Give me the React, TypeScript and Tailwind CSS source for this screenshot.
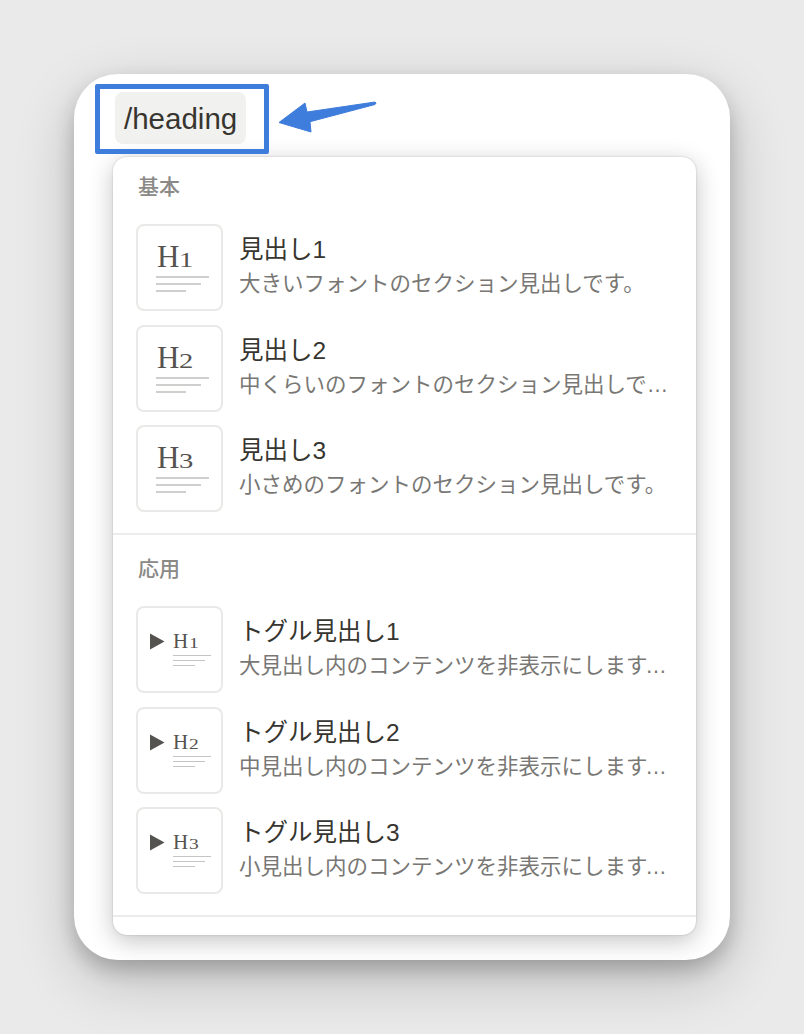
const jp = '"Liberation Sans","Noto Sans CJK JP",sans-serif';

type Item = { level: number; title: string; desc: string };

const basic: Item[] = [
  { level: 1, title: '見出し1', desc: '大きいフォントのセクション見出しです。' },
  { level: 2, title: '見出し2', desc: '中くらいのフォントのセクション見出しです。' },
  { level: 3, title: '見出し3', desc: '小さめのフォントのセクション見出しです。' },
];

const advanced: Item[] = [
  { level: 1, title: 'トグル見出し1', desc: '大見出し内のコンテンツを非表示にします。開閉できます。' },
  { level: 2, title: 'トグル見出し2', desc: '中見出し内のコンテンツを非表示にします。開閉できます。' },
  { level: 3, title: 'トグル見出し3', desc: '小見出し内のコンテンツを非表示にします。開閉できます。' },
];

const BigIcon = ({ level }: { level: number }) => (
  <div className="w-[87px] h-[87px] shrink-0 rounded-[8px] border-2 border-[#e9e9e7] bg-white flex flex-col pl-[18px] pt-[14px]">
    <div className="ml-[1px] h-[34px] text-[31px] leading-[34px] text-[#55534f] font-['Liberation_Serif',serif] whitespace-nowrap">
      H<span className="inline-block text-[22px] leading-none scale-x-[1.3] origin-left">{level}</span>
    </div>
    <div className="mt-[2px] w-[53px] h-[2px] bg-[#cfcfcd]" />
    <div className="mt-[5px] w-[45px] h-[2px] bg-[#cfcfcd]" />
    <div className="mt-[5px] w-[30px] h-[2px] bg-[#cfcfcd]" />
  </div>
);

const ToggleIcon = ({ level }: { level: number }) => (
  <div className="w-[87px] h-[87px] shrink-0 rounded-[8px] border-2 border-[#e9e9e7] bg-white flex pl-[12px] pt-[24px]">
    <svg width="15" height="17" viewBox="0 0 15 17" className="shrink-0 mt-[1px]">
      <path d="M0 0.5 L14.5 8.5 L0 16.5 Z" fill="#55534f" />
    </svg>
    <div className="ml-[8px] flex flex-col -mt-[2px]">
      <div className="h-[22px] text-[21px] leading-[22px] text-[#55534f] font-['Liberation_Serif',serif] whitespace-nowrap">
        H<span className="inline-block ml-[1px] text-[15px] leading-none scale-x-[1.3] origin-left">{level}</span>
      </div>
      <div className="mt-[3px] w-[38px] h-[1px] bg-[#c4c4c2]" />
      <div className="mt-[4px] w-[32px] h-[1px] bg-[#c4c4c2]" />
      <div className="mt-[4px] w-[22px] h-[1px] bg-[#c4c4c2]" />
    </div>
  </div>
);

const Row = ({ item, toggle }: { item: Item; toggle?: boolean }) => (
  <div className="flex items-center h-[87px] pl-[23px] pr-[24px]">
    {toggle ? <ToggleIcon level={item.level} /> : <BigIcon level={item.level} />}
    <div className="ml-[16px] min-w-0 flex-1 -mt-[3px]">
      <div className="text-[24.5px] leading-[33px] text-[#37352f]">{item.title}</div>
      <div className="mt-[3px] text-[21.5px] leading-[30px] text-[#787774] truncate">{item.desc}</div>
    </div>
  </div>
);

const Section = ({ label, items, toggle }: { label: string; items: Item[]; toggle?: boolean }) => (
  <div className={`${toggle ? 'pt-[20px]' : 'pt-[16px]'} pb-[21px] border-b-2 border-[#ececeb]`}>
    <div className="pl-[25px] text-[21px] leading-[28px] font-medium text-[#8a8986]">{label}</div>
    <div className="mt-[23px] flex flex-col gap-[13.5px]">
      {items.map((item) => (
        <Row key={item.title} item={item} toggle={toggle} />
      ))}
    </div>
  </div>
);

export default function App() {
  return (
    <div className="w-[804px] h-[1034px] bg-[#eaeaea] pt-[74px] pl-[74px] overflow-hidden" style={{ fontFamily: jp }}>
      <div className="relative w-[656px] h-[886px] bg-white rounded-[44px] shadow-[0_10px_20px_rgba(0,0,0,0.2),0_20px_60px_rgba(0,0,0,0.2)] pt-[18px] pl-[41px]">
        <div className="w-fit h-[52px] px-[9px] rounded-[8px] bg-[#f1f1ef] text-[29.5px] leading-[54px] text-[#37352f]">
          /heading
        </div>

        {/* annotation */}
        <div className="absolute left-[21px] top-[10px] w-[174px] h-[70px] border-[5px] border-[#3f7ddc] rounded-[2px]" />
        <svg className="absolute left-[200px] top-[22px]" width="110" height="40" viewBox="0 0 110 40">
          <path
            d="M5 26.5 L31 7 L33 16 L101 6 Q103 7 101 8.5 L36 25.7 L37 36 Z"
            fill="#3f7ddc"
            stroke="#3f7ddc"
            strokeWidth="1"
            strokeLinejoin="round"
          />
        </svg>

        <div className="mt-[13px] -ml-[2px] w-[583px] h-[778px] bg-white rounded-[14px] overflow-hidden shadow-[0_0_2px_rgba(0,0,0,0.22),0_6px_24px_rgba(0,0,0,0.24)]">
          <Section label="基本" items={basic} />
          <Section label="応用" items={advanced} toggle />
        </div>
      </div>
    </div>
  );
}
